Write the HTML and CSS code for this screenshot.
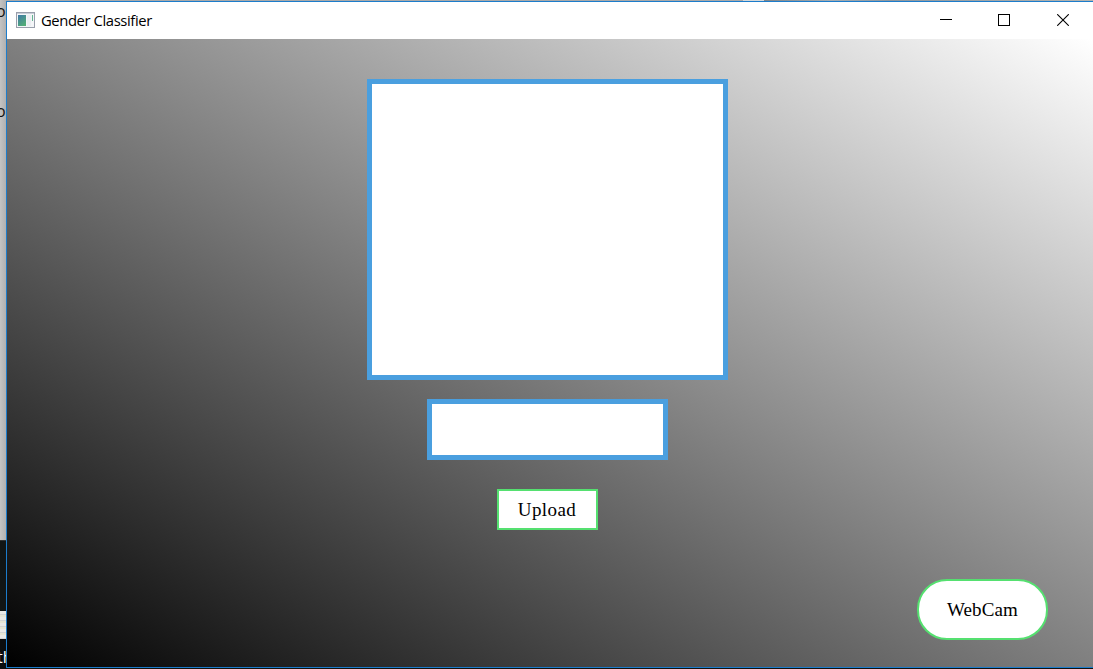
FILE: index.html
```html
<!DOCTYPE html>
<html lang="en">
<head>
<meta charset="utf-8">
<title>Gender Classifier</title>
<link rel="stylesheet" href="styles.css">
</head>
<body>
<div class="desktop">
  <div class="backdrop">
    <div class="panel panel-gray"><span class="letter">o</span><span class="letter">o</span></div>
    <div class="panel panel-dark"></div>
    <div class="panel panel-light"></div>
    <div class="panel panel-dock"><span class="dock-text">th</span></div>
  </div>
  <div class="window">
    <header class="titlebar">
      <svg class="app-icon" width="19" height="16" viewBox="0 0 19 16">
        <defs><linearGradient id="pane" x1="0" y1="0" x2=".6" y2="1"><stop offset="0" stop-color="#3f78a8"/><stop offset="1" stop-color="#52ac78"/></linearGradient></defs>
        <rect x=".5" y=".5" width="18" height="15" fill="#f4f6f8" stroke="#9a9fac"/>
        <path d="M1 1.5h17" stroke="#c9ced8"/>
        <rect x="2" y="3" width="8" height="11" fill="url(#pane)"/>
        <rect x="11" y="3" width="4" height="11" fill="#eceef2"/>
        <path d="M16.5 3v6" stroke="#62b491"/>
      </svg>
      <h1 class="title">Gender Classifier</h1>
      <div class="controls">
        <svg width="12" height="12" viewBox="0 0 12 12"><path d="M0 5.5h12" stroke="#000"/></svg>
        <svg width="12" height="12" viewBox="0 0 12 12"><rect x=".5" y=".5" width="11" height="11" fill="none" stroke="#000"/></svg>
        <svg width="12" height="12" viewBox="0 0 12 12"><path d="M.2.2l11.6 11.6M11.8.2L.2 11.8" stroke="#000" stroke-width="1.1"/></svg>
      </div>
    </header>
    <main class="client">
      <div class="column">
        <div class="image-view"></div>
        <div class="result"></div>
        <button class="button upload">Upload</button>
      </div>
      <button class="button webcam">WebCam</button>
    </main>
  </div>
</div>
</body>
</html>
```
FILE: styles.css
```css
* { box-sizing: border-box; }
body { margin: 0; }

.desktop {
  display: flex;
  width: 1093px;
  height: 669px;
  overflow: hidden;
  padding-top: 1px;
  background: linear-gradient(90deg, #a9a9a9 743px, #d4d8da 743px, #d4d8da 764px, #7e858a 764px, #a4adb3 830px, #8d979f 890px, #b5b5b0) 0 0 / 100% 1px no-repeat, #11110e;
}

.backdrop {
  width: 6px;
  flex: none;
  display: flex;
  flex-direction: column;
  overflow: hidden;
  margin-top: -1px;
  font: 16px/20px "Open Sans", "Noto Sans", sans-serif;
}
.panel { flex: none; overflow: hidden; }
.panel-gray {
  height: 540px;
  display: flex;
  flex-direction: column;
  gap: 80px;
  padding-top: 1px;
  background: linear-gradient(90deg, #c4c4c4, #b0b0b0);
}
.letter { margin-left: -4px; color: #111; }
.panel-dark { height: 71px; background: #111515; border-top: 1px solid #333; }
.panel-light {
  height: 28px;
  background: repeating-linear-gradient(#e9e9e6 0 3px, #d3d4d3 3px 4px, #e5e5d4 4px 6px);
}
.panel-dock { height: 30px; background: #0b0d0e; padding-top: 8px; color: #fff; }
.dock-text { margin-left: -3px; }

.window {
  flex: 1;
  height: 667px;
  display: flex;
  flex-direction: column;
  border: 1px solid #1c7ccb;
  border-right: 0;
}

.titlebar {
  flex: none;
  height: 37px;
  display: flex;
  align-items: center;
  padding: 0 24px 1px 9px;
  background: #fff;
}
.app-icon { margin-right: 6px; }
.title {
  margin: 0;
  font: 400 14.8px/20px "Open Sans", "Noto Sans", sans-serif;
  letter-spacing: -0.4px;
  color: #000;
}
.controls { display: flex; gap: 47px; margin-left: auto; }
.controls svg { display: block; }
.controls svg:first-child { margin-right: -1px; }

.client {
  flex: 1;
  display: flex;
  flex-direction: column;
  padding: 40px 45px 27px 360px;
  background: linear-gradient(to top right, #000, #fff);
}
.column {
  width: 361px;
  display: flex;
  flex-direction: column;
  align-items: center;
}
.image-view, .result { border: 5px solid #4a9fdf; background: #fff; }
.image-view { width: 361px; height: 301px; }
.result { width: 241px; height: 61px; margin-top: 19px; }

.button {
  padding: 0;
  border: 2px solid #55e070;
  background: #fff;
  color: #000;
  font: 19px/22px "Liberation Serif", "Times New Roman", serif;
}
.upload { width: 101px; height: 41px; margin-top: 29px; letter-spacing: 0.4px; padding-right: 1px; }
.webcam {
  width: 131px;
  height: 61px;
  margin-top: auto;
  align-self: flex-end;
  border-radius: 30px;
  letter-spacing: 0.1px;
}
```
